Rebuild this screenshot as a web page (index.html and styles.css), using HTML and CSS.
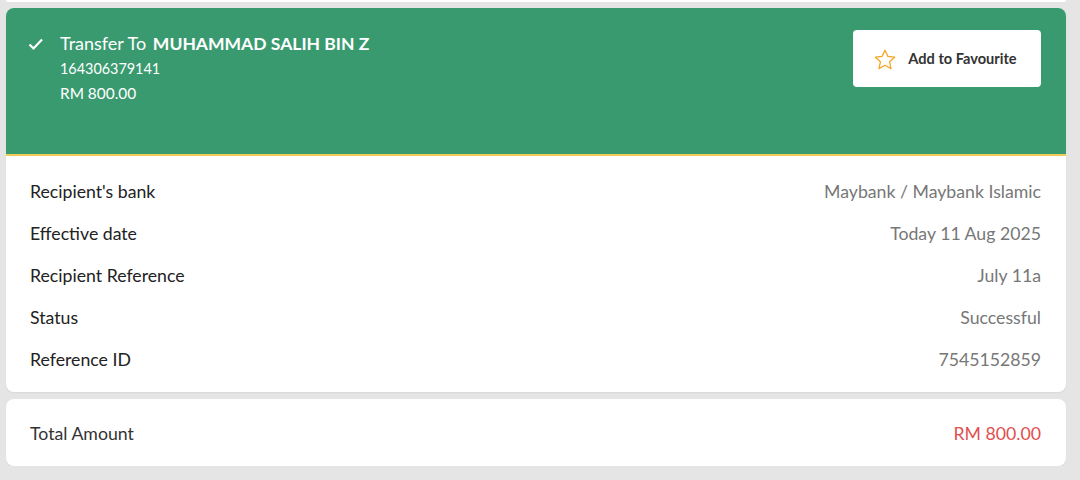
FILE: index.html
```html
<!DOCTYPE html>
<html>
<head>
<meta charset="utf-8">
<link rel="stylesheet" href="styles.css">
</head>
<body>
<div class="page">
  <div class="prev-card"></div>
  <div class="receipt">
    <div class="header">
      <div class="check">
        <svg width="16" height="16" viewBox="0 0 16 16"><path d="M1.5 8.5 L5.5 12.5 L14 3.5" fill="none" stroke="#fff" stroke-width="2.2"/></svg>
      </div>
      <div class="info">
        <div class="title">Transfer To <span class="name">MUHAMMAD SALIH BIN Z</span></div>
        <div class="acct">164306379141</div>
        <div class="amt">RM 800.00</div>
      </div>
      <button class="fav">
        <svg width="24" height="24" viewBox="0 0 24 24"><path d="M12 2.3 L14.9 8.4 L21.6 9.2 L16.6 13.8 L18 20.6 L12 17.2 L6 20.6 L7.4 13.8 L2.4 9.2 L9.1 8.4 Z" fill="none" stroke="#f5a623" stroke-width="1.3" stroke-linejoin="round"/></svg>
        <span>Add to Favourite</span>
      </button>
    </div>
    <div class="details">
      <div class="row"><span class="label">Recipient's bank</span><span class="value">Maybank / Maybank Islamic</span></div>
      <div class="row"><span class="label">Effective date</span><span class="value">Today 11 Aug 2025</span></div>
      <div class="row"><span class="label">Recipient Reference</span><span class="value">July 11a</span></div>
      <div class="row"><span class="label">Status</span><span class="value">Successful</span></div>
      <div class="row"><span class="label">Reference ID</span><span class="value">7545152859</span></div>
    </div>
  </div>
  <div class="total">
    <span class="label">Total Amount</span><span class="value red">RM 800.00</span>
  </div>
</div>
</body>
</html>
```
FILE: styles.css
```css
html, body {
  margin: 0;
  padding: 0;
  background: #e5e5e5;
  font-family: Lato, "Open Sans", sans-serif;
}
.page {
  width: 1060px;
  padding-left: 6px;
  display: flex;
  flex-direction: column;
}
.prev-card {
  height: 2px;
  background: #fff;
  border-radius: 0 0 6px 6px;
  margin-bottom: 6px;
}
.receipt {
  background: #fff;
  border-radius: 8px;
  overflow: hidden;
  box-shadow: 0 1px 2px rgba(0,0,0,0.06);
}
.header {
  background: #3a9a6f;
  height: 146px;
  border-bottom: 2px solid #f2cd55;
  display: flex;
  align-items: flex-start;
  padding: 0 25px 0 22px;
  box-sizing: content-box;
}
.check {
  margin-top: 28px;
  width: 16px;
  height: 16px;
  display: flex;
}
.info {
  margin-left: 16px;
  margin-top: 23px;
  color: #fff;
  flex: 1;
}
.title {
  font-size: 18px;
  line-height: 24px;
}
.name {
  font-weight: 700;
  font-size: 17.5px;
  margin-left: 2px;
}
.acct {
  font-size: 14.4px;
  line-height: 18px;
  margin-top: 4px;
}
.amt {
  font-size: 15.4px;
  line-height: 20px;
  margin-top: 5px;
}
.fav {
  margin-top: 22px;
  width: 188px;
  height: 57px;
  background: #fff;
  border: none;
  border-radius: 4px;
  display: flex;
  align-items: center;
  justify-content: center;
  gap: 11px;
  font-family: inherit;
  font-size: 14.6px;
  font-weight: 700;
  color: #333;
  padding: 0 4px 0 0;
}
.fav svg {
  margin-top: 2px;
}
.details {
  padding: 14px 25px 12px 24px;
}
.row, .total {
  display: flex;
  justify-content: space-between;
  align-items: center;
  height: 42px;
  font-size: 17.7px;
}
.label {
  color: #222;
}
.value {
  color: #777;
}
.total {
  margin-top: 7px;
  background: #fff;
  border-radius: 8px;
  height: 67px;
  padding: 2px 25px 0 24px;
  box-sizing: border-box;
  box-shadow: 0 1px 2px rgba(0,0,0,0.06);
}
.total .label {
  color: #333;
}
.red {
  color: #e14f4f;
}
```
